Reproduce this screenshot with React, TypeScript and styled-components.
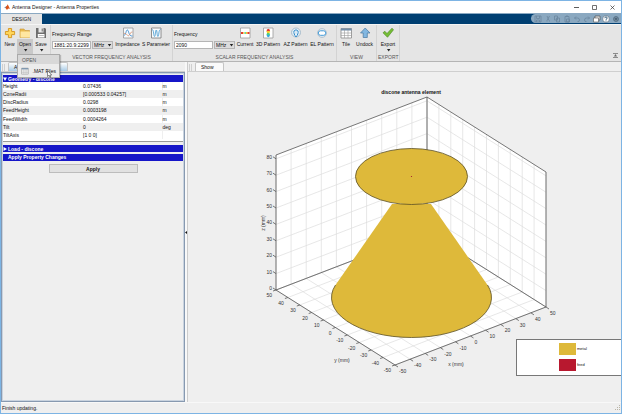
import React from "react";
import styled, { createGlobalStyle, css } from "styled-components";

const Global = createGlobalStyle`
  * { box-sizing: border-box; }
  body { margin: 0; font-family: "Liberation Sans", Arial, sans-serif; font-size: 5px; line-height: 6px; color: #111; }
  button, input, select { font: inherit; color: inherit; margin: 0; }
  svg { display: block; }
`;

const Window = styled.div`
  display: flex;
  flex-direction: column;
  min-height: 100vh;
  background: #efefef;
  border: 1px solid #7db4e4;
`;

const TitleBar = styled.header`
  display: flex;
  align-items: center;
  height: 12px;
  padding-left: 3px;
  gap: 2px;
  background: #fff;
`;
const Title = styled.h1`
  flex: 1;
  margin: 0;
  font-size: 5px;
  font-weight: 400;
`;
const WindowButtons = styled.div`
  display: flex;
`;
const WindowButton = styled.button`
  display: grid;
  place-items: center;
  width: 18px;
  height: 11px;
  padding: 0;
  border: 0;
  background: none;
`;

const Ribbon = styled.div`
  display: flex;
  justify-content: space-between;
  height: 11px;
  background: #003f72;
  border-top: 1px solid #8ba9c2;
`;
const RibbonTab = styled.button`
  width: 41px;
  padding: 0;
  border: 0;
  background: #e5e5e5;
`;
const QuickBar = styled.div`
  display: flex;
  align-items: center;
  width: 90px;
  padding-left: 2px;
  margin-bottom: 1px;
  border-radius: 5px 0 0 5px;
  background: #8aa8c0;
`;
const QuickButton = styled.button`
  display: grid;
  place-items: center;
  flex: 1;
  height: 8px;
  padding: 0;
  border: 0;
  background: none;
`;

const Strip = styled.div`
  display: flex;
  height: 38px;
  background: #e5e5e5;
  border-top: 1px solid #f5f5f5;
  border-bottom: 1px solid #b5b5b5;
`;
const Section = styled.section`
  display: flex;
  flex-direction: column;
  justify-content: space-between;
  padding: 1px 1px 0;
  & + & { border-left: 1px solid #d3d3d3; }
`;
const Tools = styled.div`
  display: flex;
`;
const Caption = styled.div`
  height: 7px;
  text-align: center;
  color: #555;
`;
const StripEnd = styled.div`
  flex: 1;
  display: flex;
  justify-content: flex-end;
  align-items: flex-end;
  padding: 3px;
  border-left: 1px solid #d3d3d3;
`;
const PlainButton = styled.button`
  padding: 0;
  border: 0;
  background: none;
`;
const ToolButton = styled.button<{ $w: number; $open?: boolean }>`
  display: flex;
  flex-direction: column;
  align-items: center;
  width: ${(p) => p.$w}px;
  height: 28px;
  padding: 1px 0 0;
  gap: 2px;
  border: 0;
  background: none;
  white-space: nowrap;
  ${(p) =>
    p.$open &&
    css`
      background: linear-gradient(#e5e5e5 13px, #c9c9c9 13px);
    `}
`;
const MenuAnchor = styled.div`
  position: relative;
`;
const Menu = styled.div`
  position: absolute;
  z-index: 2;
  top: 100%;
  left: 0;
  width: 43px;
  border: 1px solid #aaa;
  background: #ececec;
  box-shadow: 1px 1px 1px #0003;
`;
const MenuTitle = styled.div`
  height: 9px;
  padding: 2px 4px 0;
  background: #d8d8d8;
  color: #555;
`;
const MenuItem = styled.button`
  display: flex;
  align-items: center;
  gap: 4px;
  width: 100%;
  height: 13px;
  padding: 0 3px;
  border: 0;
  background: none;
  white-space: nowrap;
`;
const Pointer = styled.svg`
  position: absolute;
  left: 29px;
  bottom: -1px;
`;

const Field = styled.div`
  display: flex;
  flex-direction: column;
  gap: 4px;
  width: 62px;
  padding: 5px 0 0;
`;
const FieldRow = styled.div`
  display: flex;
  gap: 1px;
`;
const TextBox = styled.input`
  width: 39px;
  height: 8px;
  padding: 0 1px;
  border: 1px solid #b5b5b5;
  background: #fff;
`;
const UnitWrap = styled.span`
  position: relative;
  display: inline-flex;
`;
const Unit = styled.select`
  appearance: none;
  width: 21px;
  height: 8px;
  padding: 0 1px;
  border: 1px solid #b5b5b5;
  border-radius: 0;
  background: #dcdcdc;
`;
const UnitArrow = styled.svg`
  position: absolute;
  right: 1px;
  top: 3px;
  pointer-events: none;
`;

const Workspace = styled.div`
  flex: 1;
  display: flex;
`;
const PropertyPane = styled.aside`
  display: flex;
  flex-direction: column;
  width: 184px;
`;
const TabRow = styled.div`
  display: flex;
  align-items: flex-end;
  height: 10px;
  padding-left: 1px;
  background: #efefef;
  border-bottom: 1px solid #cfcfcf;
`;
const Grip = styled.span`
  width: 3px;
  height: 7px;
  margin-right: 3px;
  border: solid #cfcfcf;
  border-width: 0 1px;
`;
const DocTab = styled.button<{ $w: number; $active?: boolean }>`
  width: ${(p) => p.$w}px;
  height: 9px;
  padding: 0 5px;
  border: 1px solid #c5c5c5;
  border-bottom: 0;
  border-radius: 2px 2px 0 0;
  background: ${(p) => (p.$active ? "linear-gradient(#fff, #a9cbe6)" : "#fafafa")};
  text-align: left;
  white-space: nowrap;
`;
const Properties = styled.div`
  flex: 1;
  display: flex;
  flex-direction: column;
  border: 1px solid #8799b0;
  box-shadow: inset 0 0 0 1px #c9d3df;
  padding: 2px 1px;
`;
const Bar = styled.button`
  display: flex;
  align-items: center;
  gap: 1px;
  height: 7px;
  padding: 0;
  border: 0;
  background: #1616c8;
  color: #fff;
  font-weight: 700;
`;
const BarHeading = styled.h2`
  height: 7px;
  margin: 2px 0 3px;
  padding: 0 5px;
  background: #1616c8;
  color: #fff;
  font-size: 5px;
  line-height: 7px;
`;
const Grid = styled.table`
  width: 100%;
  height: 57px;
  border-collapse: collapse;
  table-layout: fixed;
  background: #fff;
  tr:nth-child(even) { background: #efefef; }
  td, th { padding: 0; text-align: left; font-weight: 400; }
  td + td { border-left: 1px solid #efefef; }
`;
const GridFrame = styled.div`
  margin-bottom: 3px;
  padding-bottom: 2px;
  background: #fff;
  border-bottom: 1px solid #999;
`;
const Apply = styled.button`
  align-self: center;
  width: 89px;
  height: 9px;
  padding: 0;
  border: 1px solid #bcbcbc;
  background: #e1e1e1;
  font-weight: 700;
`;
const Splitter = styled.div`
  display: flex;
  align-items: center;
  width: 3px;
  background: #f8f8f8;
  border-right: 1px solid #ccc;
`;
const FigurePane = styled.main`
  flex: 1;
  display: flex;
  flex-direction: column;
  min-width: 0;
`;
const Figure = styled.div`
  position: relative;
  flex: 1;
  display: flex;
`;
const Plot = styled.svg`
  flex: 1;
  width: 100%;
  min-height: 0;
`;
const Legend = styled.div`
  position: absolute;
  right: 0;
  bottom: 26px;
  display: flex;
  flex-direction: column;
  gap: 4px;
  width: 105px;
  padding: 3px 0 4px 42px;
  border: 1px solid #777;
  border-right: 0;
  background: #fff;
  font-size: 4px;
`;
const LegendRow = styled.div`
  display: flex;
  align-items: center;
  gap: 1px;
`;
const Swatch = styled.span<{ $c: string }>`
  width: 17px;
  height: 12px;
  background: ${(p) => p.$c};
`;
const Status = styled.footer`
  display: flex;
  justify-content: space-between;
  align-items: center;
  height: 11px;
  padding-left: 1px;
  border-top: 1px solid #f8f8f8;
`;

const Arrow = () => (
  <svg width="5" height="3" viewBox="0 0 5 3"><path d="M1 0h3.4L2.7 2.6z" fill="#222" /></svg>
);

const paths: Record<string, React.ReactNode> = {
  plus: <path d="M4.4 1.500h3.200v3h3v3.100h-3v3H4.400v-3h-3V4.500h3z" fill="#ffd65a" stroke="#d99b26" />,
  folder: <><path d="M1 2h4l1 1.500h4.500v7H1z" fill="#e9b94c" stroke="#c99632" strokeWidth=".6" /><path d="M1.500 4.500h9.500v6H1.500z" fill="#ffe7a1" /></>,
  save: <><path d="M1 1h9l1 1v9H1z" fill="#6d6d6d" /><path d="M3.500 1h5v4.500h-5z" fill="#e9e9e9" /><path d="M6.700 1.500h1v3h-1z" fill="#666" /><path d="M2.800 7h6.700v3.500H2.800z" fill="#fff" /><path d="M3.800 8.500h5" stroke="#888" strokeWidth=".6" /></>,
  impedance: <><path d="M1.500 1h9.500v10H1.500z" fill="#f8fbfd" stroke="#888" strokeWidth=".7" /><path d="M2 8.500C4 8 4 2.500 5.500 3s1 6.500 5 6" fill="none" stroke="#3c8bd0" strokeWidth=".9" /><path d="M2 6.500c2.500-1 3.500 3.500 5 2s1.500-4 3.500-3.500" fill="none" stroke="#d9825a" strokeWidth=".7" /></>,
  sparam: <><path d="M1.500 1h9.500v10H1.500z" fill="#f8fbfd" stroke="#777" strokeWidth=".8" /><path d="M2 2.500C4 2.500 3.500 9.500 4.500 9.500S5.500 3 6.300 3 7 9.500 8 9.500 8.500 2.500 10.500 2.500" fill="none" stroke="#3e96ce" strokeWidth=".8" /></>,
  current: <><path d="M1.500 1h9.500v10H1.500z" fill="#fff" stroke="#999" strokeWidth=".8" /><path d="M2 5h2v2H2z" fill="#e53b2e" /><path d="M4 5.200h1.500v1.600H4z" fill="#f7c933" /><path d="M5.500 5.200H7v1.600H5.500z" fill="#42c987" /><path d="M7 5h1.500v2H7z" fill="#f7c933" /><path d="M8.500 5h2v2h-2z" fill="#e53b2e" /></>,
  pattern3d: <><path d="M1.500 1h9.500v10H1.500z" fill="#fff" stroke="#999" strokeWidth=".8" /><path d="M4.500 4.500q0-2.800 1.800-2.800t1.800 2.800z" fill="#e53b2e" /><path d="M4.500 4h3.600L7.500 6H5z" fill="#f6cd2e" /><path d="M5 6h2.500l.5 2H4.500z" fill="#57d16f" /><path d="M4.500 7.800h3.600q-.3 2.400-1.800 2.400T4.500 7.800z" fill="#32a9e0" /></>,
  az: <><circle cx="6" cy="5.500" r="4.500" fill="#e3edf4" stroke="#9ab2c4" strokeWidth=".8" /><path d="M6 10C4.500 8 3.500 6 4 4q2-2.500 4 0c.5 2-.5 4-2 6z" fill="#fff" stroke="#328bcb" /><path d="M6 3.500v4" stroke="#7fb8df" strokeWidth=".6" /></>,
  el: <><circle cx="6" cy="6" r="4.500" fill="#dde7ee" stroke="#aebdc8" strokeWidth=".8" /><rect x="2.300" y="3.800" width="7.500" height="4.500" rx="2.200" fill="#fff" stroke="#459bd7" /></>,
  tile: <><path d="M1 1.500h10.500v9.500H1z" fill="#fff" stroke="#888" strokeWidth=".8" /><path d="M1 1.500h10.500v2H1z" fill="#718da8" /><path d="M4.500 3v8M8 3v8M1 6h10.500M1 8.500h10.500" stroke="#999" strokeWidth=".6" /></>,
  undock: <path d="M6.200 1 11 6H8.300v4.500H4.200V6H1.500z" fill="#82b7e1" stroke="#47779f" strokeWidth=".7" />,
  check: <path d="M1 5.800 2.800 4.200 5 6.500 10 1.200 11.500 2.800 5.500 10.300z" fill="#76bd36" stroke="#47861d" strokeWidth=".6" />,
};

const Icon = ({ name }: { name: string }) => (
  <svg width="12" height="12" viewBox="0 0 12 12" aria-hidden>{paths[name]}</svg>
);

type ToolProps = { icon: string; label: string; w: number; arrow?: boolean; open?: boolean };
const Tool = ({ icon, label, w, arrow, open }: ToolProps) => (
  <ToolButton $w={w} $open={open}>
    <Icon name={icon} />
    <span>{label}</span>
    {arrow && <Arrow />}
  </ToolButton>
);

const FrequencyField = ({ id, label, value }: { id: string; label: string; value: string }) => (
  <Field>
    <label htmlFor={id}>{label}</label>
    <FieldRow>
      <TextBox id={id} defaultValue={value} />
      <UnitWrap>
        <Unit aria-label={`${label} unit`} defaultValue="MHz">
          <option>MHz</option>
          <option>GHz</option>
        </Unit>
        <UnitArrow width="5" height="3" viewBox="0 0 5 3"><path d="M.800 0h3.400L2.500 2.600z" fill="#222" /></UnitArrow>
      </UnitWrap>
    </FieldRow>
  </Field>
);

const quickIcons: [string, React.ReactNode][] = [
  ["Save", <path d="M1 1h6v6H1zM2.500 1v2.500h3V1M2.500 7V5h3v2" />],
  ["Cut", <path d="M5.500 1 3 5.500M3 1l2 4.500M2.500 6h1M5 6h1" />],
  ["Copy", <path d="M1.500 1h3v4h-3zM3.500 3h3v4h-3z" />],
  ["Paste", <path d="M2 1.500h4V7H2zM3 1h2M3.500 4h3v3h-3z" />],
  ["Undo", <path d="M3 1.500 1.500 3 3 4.500M1.500 3h3q2 0 2 2T4.500 6.500" />],
  ["Redo", <path d="M5 1.500 6.500 3 5 4.500M6.500 3h-3q-2 0-2 2T3.500 6.500" />],
];

const rows = [
  ["Height", "0.07436", "m"],
  ["ConeRadii", "[0.000533 0.04257]", "m"],
  ["DiscRadius", "0.0298", "m"],
  ["FeedHeight", "0.0003198", "m"],
  ["FeedWidth", "0.0004264", "m"],
  ["Tilt", "0", "deg"],
  ["TiltAxis", "[1 0 0]", ""],
];

type Pt = [number, number];
const left: Pt = [88, 219];
const front: Pt = [207, 294];
const right: Pt = [358, 236];
const back: Pt = [239, 161];
const HEIGHT = 135;
const STEP = 16.4;
const mix = (a: Pt, b: Pt, t: number): Pt => [a[0] + (b[0] - a[0]) * t, a[1] + (b[1] - a[1]) * t];
const up = (p: Pt, h: number): Pt => [p[0], p[1] - h];
const line = (a: Pt, b: Pt) => `M${a[0]} ${a[1]}L${b[0]} ${b[1]}`;
const tens = Array.from({ length: 11 }, (_, i) => i);
const levels = Array.from({ length: 9 }, (_, i) => i);

const gridPath = [
  ...tens.flatMap((i) => {
    const t = i / 10;
    return [
      line(mix(left, front, t), mix(back, right, t)),
      line(mix(left, back, t), mix(front, right, t)),
      line(mix(left, back, t), up(mix(left, back, t), HEIGHT)),
      line(mix(back, right, t), up(mix(back, right, t), HEIGHT)),
    ];
  }),
  ...levels.flatMap((k) => [
    line(up(left, k * STEP), up(back, k * STEP)),
    line(up(back, k * STEP), up(right, k * STEP)),
  ]),
].join("");

const tickPath = [
  ...tens.flatMap((i) => {
    const y = mix(left, front, i / 10);
    const x = mix(front, right, i / 10);
    return [line(y, [y[0] - 3, y[1] + 1]), line(x, [x[0] + 3, x[1] + 2])];
  }),
  ...levels.map((k) => line(up(left, k * STEP), [left[0] - 3, left[1] - k * STEP - 2])),
].join("");

const axisPath = [
  line(left, front), line(front, right), line(left, back), line(back, right),
  line(left, up(left, HEIGHT)), line(back, up(back, HEIGHT)), line(right, up(right, HEIGHT)),
  line(up(left, HEIGHT), up(back, HEIGHT)), line(up(back, HEIGHT), up(right, HEIGHT)),
].join("");

const outline = [left, front, right, up(right, HEIGHT), up(back, HEIGHT), up(left, HEIGHT)]
  .map((p) => p.join(",")).join(" ");

const AntennaPlot = () => (
  <Plot viewBox="0 1 433 330" role="img" aria-label="discone antenna element">
    <polygon points={outline} fill="#fff" />
    <path d={gridPath} stroke="#dcdcdc" strokeWidth=".7" fill="none" />
    <path d={axisPath + tickPath} stroke="#555" strokeWidth=".8" fill="none" />
    <path d="M204 133 147.500 214A80 40 0 1 0 299.500 214L243 133z" fill="#deb93a" />
    <path d="M147.500 214A80 40 0 1 0 299.500 214" fill="none" stroke="#5b4f25" strokeWidth=".8" />
    <ellipse cx="223.500" cy="105.500" rx="56" ry="28" fill="#deb93a" stroke="#5b4f25" strokeWidth=".8" />
    <circle cx="223.500" cy="105.500" r=".6" fill="#a2142f" />
    <g fontSize="5" fill="#333">
      {tens.map((i) => {
        const y = mix(left, front, i / 10);
        const x = mix(front, right, i / 10);
        return (
          <React.Fragment key={i}>
            <text x={y[0] - 4} y={y[1] + 7} textAnchor="end">{50 - i * 10}</text>
            <text x={x[0] + 4} y={x[1] + 8}>{i * 10 - 50}</text>
          </React.Fragment>
        );
      })}
      {levels.map((k) => (
        <text key={k} x={left[0] - 4} y={left[1] - k * STEP} textAnchor="end">{k * 10}</text>
      ))}
      <text x="154" y="291" textAnchor="middle">y (mm)</text>
      <text x="268" y="295" textAnchor="middle">x (mm)</text>
      <text transform="translate(77 152) rotate(-90)" textAnchor="middle">z (mm)</text>
    </g>
    <text x="223" y="23" fontSize="5" fontWeight="700" textAnchor="middle" fill="#111">discone antenna element</text>
  </Plot>
);

export default function App() {
  return (
    <>
      <Global />
      <Window>
        <TitleBar>
          <svg width="6" height="6" viewBox="0 0 6 6"><path d="M0 3.500 2.200 2.400 3 4z" fill="#3979b8" /><path d="M2 2.500Q3 2 3.700.300 4.500 2 6 5 4.500 3.700 3 6L1.500 4z" fill="#d95319" /></svg>
          <Title>Antenna Designer - Antenna Properties</Title>
          <WindowButtons>
            <WindowButton aria-label="Minimize"><svg width="5" height="5"><path d="M0 2.500h5" stroke="#333" strokeWidth=".8" /></svg></WindowButton>
            <WindowButton aria-label="Maximize"><svg width="5" height="5"><path d="M.500.500h4v4h-4z" fill="none" stroke="#333" strokeWidth=".7" /></svg></WindowButton>
            <WindowButton aria-label="Close"><svg width="5" height="5"><path d="m.500.500 4 4m0-4-4 4" stroke="#333" strokeWidth=".7" /></svg></WindowButton>
          </WindowButtons>
        </TitleBar>

        <Ribbon>
          <RibbonTab>DESIGN</RibbonTab>
          <QuickBar>
            {quickIcons.map(([name, shape]) => (
              <QuickButton key={name} aria-label={name}>
                <svg width="8" height="8" fill="none" stroke="#6b869e" strokeWidth=".8">{shape}</svg>
              </QuickButton>
            ))}
            <QuickButton aria-label="Windows"><svg width="8" height="8"><path d="M2 1h5v4H2z" fill="#ddd" stroke="#444" strokeWidth=".6" /><path d="M.500 3h5v4h-5z" fill="#fff" stroke="#555" strokeWidth=".6" /></svg></QuickButton>
            <QuickButton aria-label="Help"><svg width="8" height="8"><circle cx="4" cy="4" r="3.300" fill="#fff" stroke="#456" strokeWidth=".5" /><path d="M2.800 3.200q0-1.300 1.200-1.300t1.200 1.200q0 .7-1.200 1.300v.5M4 5.500v.9" fill="none" stroke="#24506f" strokeWidth=".9" /></svg></QuickButton>
            <QuickButton aria-label="Toolbar options"><svg width="8" height="8"><circle cx="4" cy="4" r="2.500" fill="#718ba1" stroke="#455c70" strokeWidth=".6" /><path d="M2.700 3.500h2.600L4 5z" fill="#2b3e4e" /></svg></QuickButton>
          </QuickBar>
        </Ribbon>

        <Strip>
          <Section>
            <Tools>
              <Tool icon="plus" label="New" w={15} />
              <MenuAnchor>
                <Tool icon="folder" label="Open" w={16} arrow open />
                <Menu>
                  <MenuTitle>OPEN</MenuTitle>
                  <MenuItem><Icon name="tile" />.MAT Files</MenuItem>
                  <Pointer width="5" height="8" viewBox="0 0 5 8"><path d="M.500.500v6L2 5.200l1 2.300.8-.4L2.900 5h1.800z" fill="#fff" stroke="#222" strokeWidth=".5" /></Pointer>
                </Menu>
              </MenuAnchor>
              <Tool icon="save" label="Save" w={16} arrow />
            </Tools>
          </Section>
          <Section>
            <Tools>
              <FrequencyField id="range" label="Frequency Range" value="1881:20.9:2299" />
              <Tool icon="impedance" label="Impedance" w={27} />
              <Tool icon="sparam" label="S Parameter" w={30} />
            </Tools>
            <Caption>VECTOR FREQUENCY ANALYSIS</Caption>
          </Section>
          <Section>
            <Tools>
              <FrequencyField id="frequency" label="Frequency" value="2090" />
              <Tool icon="current" label="Current" w={18} />
              <Tool icon="pattern3d" label="3D Pattern" w={28} />
              <Tool icon="az" label="AZ Pattern" w={27} />
              <Tool icon="el" label="EL Pattern" w={26} />
            </Tools>
            <Caption>SCALAR FREQUENCY ANALYSIS</Caption>
          </Section>
          <Section>
            <Tools>
              <Tool icon="tile" label="Tile" w={16} />
              <Tool icon="undock" label="Undock" w={21} />
            </Tools>
            <Caption>VIEW</Caption>
          </Section>
          <Section>
            <Tools>
              <Tool icon="check" label="Export" w={20} arrow />
            </Tools>
            <Caption>EXPORT</Caption>
          </Section>
          <StripEnd>
            <PlainButton aria-label="Collapse toolstrip">
              <svg width="5" height="5"><path d="M0 .500h5M0 4.500h5" stroke="#666" strokeWidth=".7" /><path d="M2.500 1 4 3.500H1z" fill="#666" /></svg>
            </PlainButton>
          </StripEnd>
        </Strip>

        <Workspace>
          <PropertyPane>
            <TabRow>
              <Grip />
              <DocTab $w={60} $active aria-label="Antenna Properties">An</DocTab>
            </TabRow>
            <Properties>
              <Bar aria-expanded="true">
                <svg width="4" height="4"><path d="M0 .500h4L2 4z" fill="#fff" /></svg>Geometry - discone
              </Bar>
              <GridFrame>
                <Grid>
                  <colgroup><col width="80" /><col width="79" /><col /></colgroup>
                  <tbody>
                    {rows.map(([name, value, unit]) => (
                      <tr key={name}><th scope="row">{name}</th><td>{value}</td><td>{unit}</td></tr>
                    ))}
                  </tbody>
                </Grid>
              </GridFrame>
              <Bar aria-expanded="false">
                <svg width="4" height="4"><path d="M.500 0v4L4 2z" fill="#fff" /></svg>Load - discone
              </Bar>
              <BarHeading>Apply Property Changes</BarHeading>
              <Apply>Apply</Apply>
            </Properties>
          </PropertyPane>
          <Splitter><svg width="2" height="3"><path d="M2 0v3L0 1.500z" fill="#111" /></svg></Splitter>
          <FigurePane>
            <TabRow>
              <Grip />
              <DocTab $w={29}>Show</DocTab>
            </TabRow>
            <Figure>
              <AntennaPlot />
              <Legend>
                <LegendRow><Swatch $c="#deb93a" />metal</LegendRow>
                <LegendRow><Swatch $c="#b8182f" />feed</LegendRow>
              </Legend>
            </Figure>
          </FigurePane>
        </Workspace>

        <Status>
          <span>Finish updating.</span>
          <svg width="6" height="6"><path d="M4 0h1v1H4zM2 2h1v1H2zM4 2h1v1H4zM0 4h1v1H0zM2 4h1v1H2zM4 4h1v1H4z" fill="#b9b4a6" /></svg>
        </Status>
      </Window>
    </>
  );
}
